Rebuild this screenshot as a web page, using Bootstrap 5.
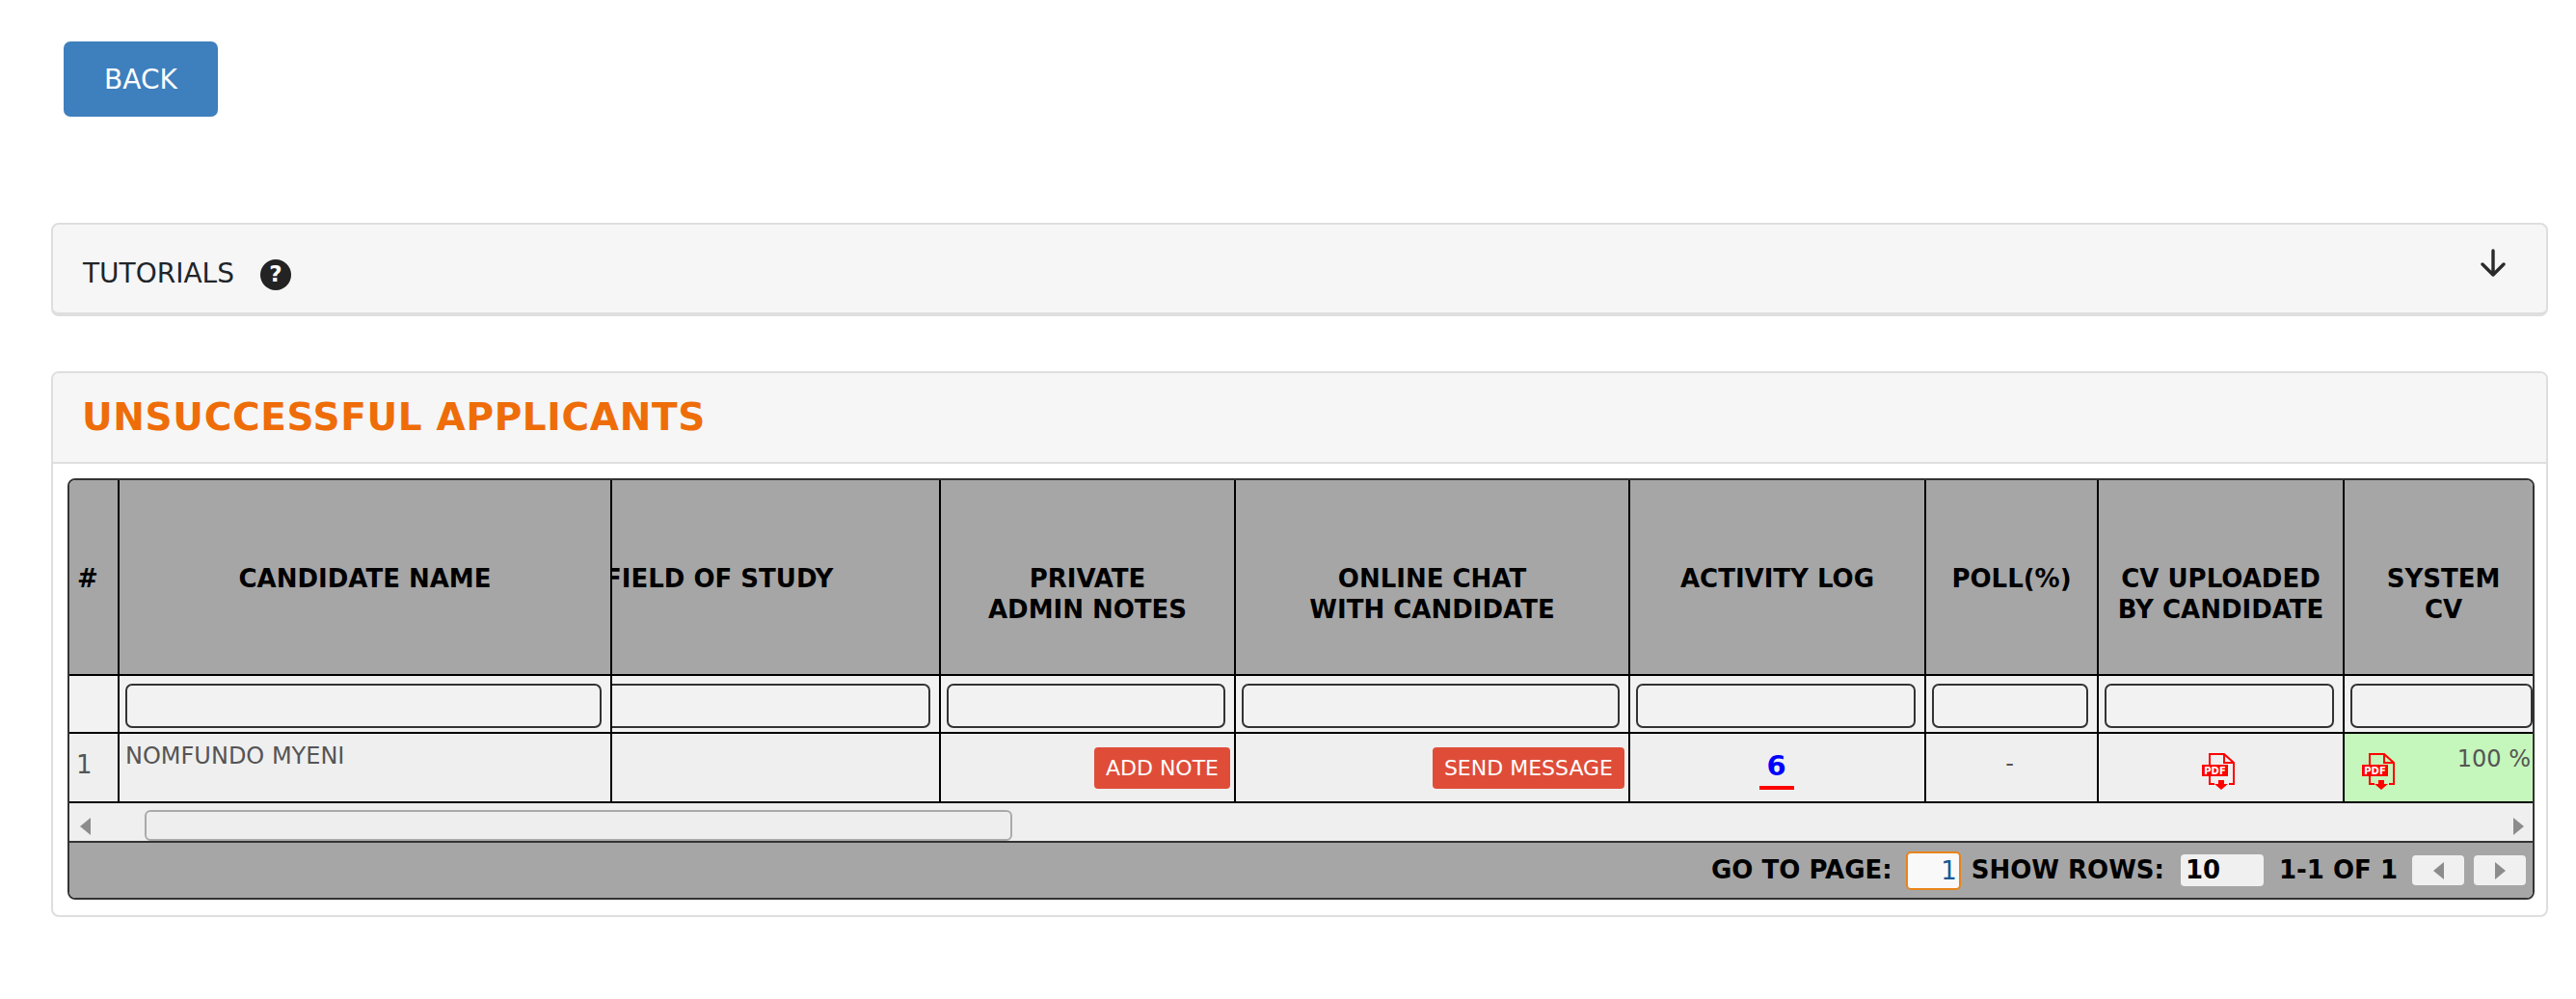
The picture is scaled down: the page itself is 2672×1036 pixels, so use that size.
<!DOCTYPE html>
<html lang="en">
<head>
<meta charset="utf-8">
<title>Unsuccessful Applicants</title>
<link href="https://cdn.jsdelivr.net/npm/bootstrap@5.3.0/dist/css/bootstrap.min.css" rel="stylesheet">
<style>
body{font-family:"DejaVu Sans",sans-serif;background:#fff;color:#212529;}
.pg-wrap{padding:43px 29px 0 53px;}
.back-btn{margin-left:13px;width:160px;height:78px;background:#3e7fbd;border:0;border-radius:7px;color:#fff;font-size:28px;padding:2px 0 0;display:flex;align-items:center;justify-content:center;margin-bottom:110px;}
.back-btn:hover{background:#3e7fbd;color:#fff;}
.tut-card{height:97px;border:2px solid #dedede;border-bottom-width:4px;border-radius:8px;background:#f6f6f6;margin-bottom:57px;padding:10px 42px 0 31px;}
.tut-label{font-size:28px;color:#212529;}
.help-dot{width:32px;height:32px;border-radius:50%;background:#232323;color:#fff;font-size:23px;font-weight:700;margin-left:27px;margin-top:2px;}
.arrow-ico{width:26px;height:30px;margin-top:-22px;}
.app-card{border:2px solid #dedede;border-radius:8px;}
.app-head{height:94px;background:#f6f6f6;border-bottom:2px solid #dedede;padding:0 0 0 30px;display:flex;align-items:center;border-radius:6px 6px 0 0;}
.app-title{font-size:39px;font-weight:700;color:#ee6d08;margin:0;letter-spacing:.65px;}
.app-body{padding:15px 12px 16px 15px;}
.grid-shell{border:2px solid #333;border-radius:8px;overflow:hidden;}
.appl-grid{table-layout:fixed;width:2555px;border-collapse:separate;border-spacing:0;margin:0;}
.appl-grid>*>tr>th,.appl-grid>*>tr>td{border:0;border-right:2px solid #000;border-bottom:2px solid #000;padding:0;overflow:hidden;box-shadow:none;}
.appl-grid>*>tr>*:last-child{border-right:0;}
.head-row>th{height:203px;background:#a6a6a6;color:#000;font-size:26px;font-weight:700;line-height:32px;text-align:center;vertical-align:top;padding-top:86px!important;}
.head-row>th.hash-col{text-align:left;padding-left:8px!important;}
.head-row>th.field-col{text-align:left;text-indent:-8px;white-space:nowrap;}
.head-row>th.sys-col{padding-left:10px!important;}
.filter-row>td{height:60px;background:#f2f2f2;vertical-align:middle;padding:3px 9px 0 6px!important;}
.filter-row>td.field-filter{padding-left:0!important;}
.filter-box{display:block;width:100%;height:46px;background:#f2f2f2;border:2px solid #333;border-radius:7px;padding:0 6px;}
.field-filter .filter-box{margin-left:-60px;width:calc(100% + 60px);}
.filter-row>td.last-filter{padding:3px 0 0 6px!important;}
.data-row>td{height:72px;background:#efefef;color:#555;font-size:24px;vertical-align:middle;position:relative;}
.data-row>td.num-cell{padding:0 0 6px 7px!important;font-size:26px;}
.data-row>td.name-cell{vertical-align:top;padding:5px 7px 0 6px!important;}
.data-row>td.act-cell{text-align:right;padding-right:4px!important;}
.data-row>td.poll-cell{padding:0 4px 9px 0!important;}
.data-row>td.cv-cell{padding-right:6px!important;}
.red-btn{background:#df4d39;border:0;border-radius:4px;color:#fff;font-size:22px;height:43px;padding:0 12px;line-height:43px;}
.red-btn:hover{background:#df4d39;color:#fff;}
.count-link{display:inline-block;width:36px;color:#00f;font-weight:700;font-size:29px;line-height:34px;text-decoration:none;border-bottom:4px solid #f00;padding-bottom:4px;margin-top:4px;}
.count-cell{padding-right:2px!important;}
.pdf-ico{width:34px;height:38px;display:block;margin-top:8px;}
.cv-ok{background:#c5f6bb!important;}
.pct-txt{font-size:24px;line-height:28px;color:#555;padding-right:2px;}
.bar-row{height:41px;background:#efefef;border-bottom:2px solid #333;padding:7px 9px 0 11px;}
.bar-thumb{width:900px;margin-left:56px;height:32px;background:#eee;border:2px solid #aaa;border-radius:6px;}
.tri-l{width:0;height:0;border-top:9px solid transparent;border-bottom:9px solid transparent;border-right:11px solid #8c8c8c;}
.tri-r{width:0;height:0;border-top:9px solid transparent;border-bottom:9px solid transparent;border-left:11px solid #8c8c8c;}
.foot-row{height:57px;background:#a6a6a6;color:#000;font-size:26px;font-weight:700;padding:0 7px 0 0;}
.page-input{width:57px;height:40px;background:#f9f9f9;border:2px solid #e8841a;border-radius:5px;color:#1a5a96;font-size:26px;font-weight:400;text-align:right;padding:0 2px 0 0;margin:0 11px 0 14px;}
.rows-box{width:86px;height:33px;background:#f0f0f0;border-radius:4px;font-size:26px;padding:0 0 0 5px;margin:0 16px 0 17px;line-height:33px;}
.pg-btn{width:54px;height:31px;background:#f0f0f0;border:0;border-radius:4px;padding:0;margin-left:10px;}
.pg-btn.first-pg{margin-left:15px;}
.cv-second{margin-left:18px;}
</style>
</head>
<body>
<div class="pg-wrap">
  <a href="#" class="btn back-btn">BACK</a>

  <div class="tut-card d-flex align-items-center justify-content-between">
    <div class="d-flex align-items-center">
      <span class="tut-label">TUTORIALS</span>
      <span class="help-dot d-flex align-items-center justify-content-center">?</span>
    </div>
    <svg class="arrow-ico" viewBox="0 0 26 30" fill="none" stroke="#2a2a2a" stroke-width="3.4" stroke-linecap="round" stroke-linejoin="round"><path d="M13 2V27M2 16L13 27L24 16"/></svg>
  </div>

  <div class="app-card">
    <div class="app-head"><h1 class="app-title">UNSUCCESSFUL APPLICANTS</h1></div>
    <div class="app-body">
      <div class="grid-shell">
        <table class="table appl-grid">
          <colgroup>
            <col style="width:52px"><col style="width:511px"><col style="width:341px"><col style="width:306px"><col style="width:409px"><col style="width:307px"><col style="width:179px"><col style="width:255px"><col style="width:195px">
          </colgroup>
          <thead>
            <tr class="head-row">
              <th class="hash-col">#</th>
              <th>CANDIDATE NAME</th>
              <th class="field-col">FIELD OF STUDY</th>
              <th>PRIVATE<br>ADMIN NOTES</th>
              <th>ONLINE CHAT<br>WITH CANDIDATE</th>
              <th>ACTIVITY LOG</th>
              <th>POLL(%)</th>
              <th>CV UPLOADED<br>BY CANDIDATE</th>
              <th class="sys-col">SYSTEM<br>CV</th>
            </tr>
            <tr class="filter-row">
              <td></td>
              <td><input class="filter-box" aria-label="Candidate name"></td>
              <td class="field-filter"><input class="filter-box" aria-label="Field of study"></td>
              <td><input class="filter-box" aria-label="Notes"></td>
              <td><input class="filter-box" aria-label="Chat"></td>
              <td><input class="filter-box" aria-label="Activity"></td>
              <td><input class="filter-box" aria-label="Poll"></td>
              <td><input class="filter-box" aria-label="CV uploaded"></td>
              <td class="last-filter"><input class="filter-box" aria-label="System CV"></td>
            </tr>
          </thead>
          <tbody>
            <tr class="data-row">
              <td class="num-cell">1</td>
              <td class="name-cell">NOMFUNDO MYENI</td>
              <td></td>
              <td class="act-cell"><a href="#" class="btn red-btn">ADD NOTE</a></td>
              <td class="act-cell"><a href="#" class="btn red-btn">SEND MESSAGE</a></td>
              <td class="text-center count-cell"><a href="#" class="count-link">6</a></td>
              <td class="text-center poll-cell">-</td>
              <td class="cv-cell"><div class="d-flex justify-content-center">
                <svg class="pdf-ico" viewBox="0 0 34 38"><path d="M8 12V1H23L33 10V32H28M8 24V32H13M23 1V10H33" fill="none" stroke="#f00" stroke-width="2"/><rect x="0" y="12" width="27" height="12" fill="#f00"/><text x="13.500" y="22" text-anchor="middle" font-family="'DejaVu Sans',sans-serif" font-size="10" font-weight="700" fill="#fff">PDF</text><path d="M17 28H23V32H27L20 38L13 32H17Z" fill="#f00"/></svg>
              </div></td>
              <td class="cv-ok"><div class="d-flex justify-content-between align-items-start">
                <svg class="pdf-ico cv-second" viewBox="0 0 34 38"><path d="M8 12V1H23L33 10V32H28M8 24V32H13M23 1V10H33" fill="none" stroke="#f00" stroke-width="2"/><rect x="0" y="12" width="27" height="12" fill="#f00"/><text x="13.500" y="22" text-anchor="middle" font-family="'DejaVu Sans',sans-serif" font-size="10" font-weight="700" fill="#fff">PDF</text><path d="M17 28H23V32H27L20 38L13 32H17Z" fill="#f00"/></svg>
                <span class="pct-txt">100 %</span>
              </div></td>
            </tr>
          </tbody>
        </table>
        <div class="bar-row d-flex align-items-start justify-content-between">
          <div class="d-flex align-items-start flex-grow-1">
            <span class="tri-l mt-2"></span>
            <div class="bar-thumb"></div>
          </div>
          <span class="tri-r mt-2"></span>
        </div>
        <div class="foot-row d-flex align-items-center justify-content-end">
          <span>GO TO PAGE:</span>
          <input class="page-input" value="1" aria-label="Go to page">
          <span>SHOW ROWS:</span>
          <span class="rows-box">10</span>
          <span>1-1 OF 1</span>
          <button class="pg-btn first-pg d-flex align-items-center justify-content-center" aria-label="Previous"><span class="tri-l"></span></button>
          <button class="pg-btn d-flex align-items-center justify-content-center" aria-label="Next"><span class="tri-r"></span></button>
        </div>
      </div>
    </div>
  </div>
</div>
<script src="https://cdn.jsdelivr.net/npm/bootstrap@5.3.0/dist/js/bootstrap.bundle.min.js"></script>
</body>
</html>
